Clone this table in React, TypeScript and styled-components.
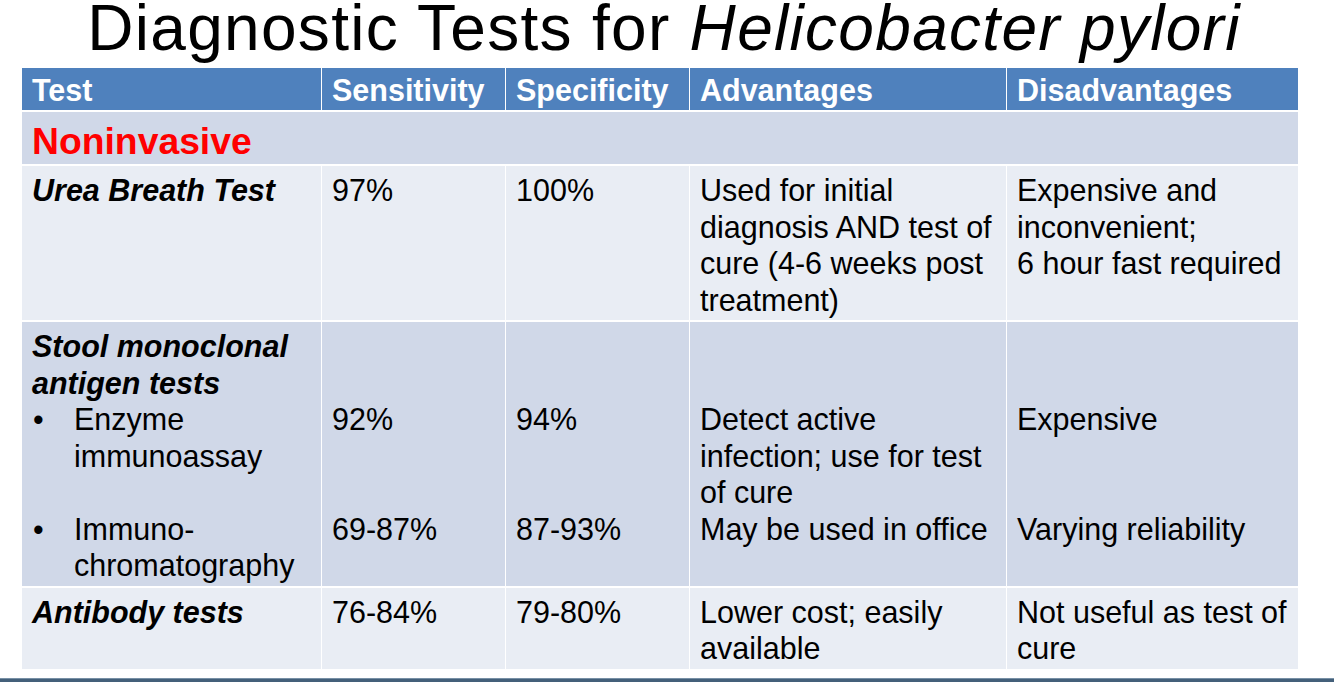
import React from "react";
import styled, { createGlobalStyle } from "styled-components";

const LINE = 36.5;

const GlobalStyle = createGlobalStyle`
    html, body {
        margin: 0;
        padding: 0;
        background: #ffffff;
    }
    body {
        font-family: "Liberation Sans", Arial, sans-serif;
        color: #000000;
    }
`;

const Slide = styled.div`
    width: 1334px;
    height: 682px;
    display: flex;
    flex-direction: column;
    overflow: hidden;
    background: #ffffff;
`;

const Title = styled.h1`
    margin: 0 0 12px;
    padding-right: 6px;
    font-size: 64px;
    line-height: 56px;
    letter-spacing: 1.3px;
    font-weight: normal;
    text-align: center;

    em {
        font-style: italic;
    }
`;

const Table = styled.div`
    display: grid;
    grid-template-columns: 299px 183px 183px 316px 291px;
    column-gap: 1px;
    row-gap: 2px;
    margin-left: 22px;
    width: 1276px;
    background: #ffffff;
`;

const HeadCell = styled.div`
    background: #4f81bd;
    color: #ffffff;
    font-size: 30.5px;
    font-weight: bold;
    line-height: ${LINE}px;
    padding: 4px 10px 1.5px;
    white-space: nowrap;
`;

const SectionCell = styled.div`
    grid-column: 1 / -1;
    background: #d0d8e8;
    color: #ff0000;
    font-size: 37.3px;
    font-weight: bold;
    line-height: 44px;
    padding: 7px 10px 1px;
`;

const Cell = styled.div<{ $band: "dark" | "light" }>`
    background: ${(p) => (p.$band === "dark" ? "#d0d8e8" : "#e9edf4")};
    font-size: 30.5px;
    line-height: ${LINE}px;
    padding: 6px 10px 2px;
    white-space: nowrap;
`;

const TestName = styled.div`
    font-weight: bold;
    font-style: italic;
`;

const Spacer = styled.div<{ $lines: number }>`
    height: ${(p) => p.$lines * LINE}px;
`;

const Bullet = styled.div`
    display: flex;

    &::before {
        content: "•";
        width: 41px;
        padding-left: 1px;
        flex-shrink: 0;
    }
`;

const Footer = styled.div`
    margin-top: auto;
    height: 3px;
    background: #44607a;
    border-top: 1px solid #7890a6;
`;

const headers = ["Test", "Sensitivity", "Specificity", "Advantages", "Disadvantages"];

export default function App() {
    return (
        <>
            <GlobalStyle />
            <Slide>
                <Title>
                    Diagnostic Tests for <em>Helicobacter pylori</em>
                </Title>
                <Table>
                    {headers.map((h) => (
                        <HeadCell key={h}>{h}</HeadCell>
                    ))}

                    <SectionCell>Noninvasive</SectionCell>

                    <Cell $band="light">
                        <TestName>Urea Breath Test</TestName>
                    </Cell>
                    <Cell $band="light">97%</Cell>
                    <Cell $band="light">100%</Cell>
                    <Cell $band="light">
                        Used for initial
                        <br />
                        diagnosis AND test of
                        <br />
                        cure (4-6 weeks post
                        <br />
                        treatment)
                    </Cell>
                    <Cell $band="light">
                        Expensive and
                        <br />
                        inconvenient;
                        <br />6 hour fast required
                    </Cell>

                    <Cell $band="dark">
                        <TestName>
                            Stool monoclonal
                            <br />
                            antigen tests
                        </TestName>
                        <Bullet>
                            <span>
                                Enzyme
                                <br />
                                immunoassay
                            </span>
                        </Bullet>
                        <Spacer $lines={1} />
                        <Bullet>
                            <span>
                                Immuno-
                                <br />
                                chromatography
                            </span>
                        </Bullet>
                    </Cell>
                    <Cell $band="dark">
                        <Spacer $lines={2} />
                        92%
                        <Spacer $lines={2} />
                        69-87%
                    </Cell>
                    <Cell $band="dark">
                        <Spacer $lines={2} />
                        94%
                        <Spacer $lines={2} />
                        87-93%
                    </Cell>
                    <Cell $band="dark">
                        <Spacer $lines={2} />
                        Detect active
                        <br />
                        infection; use for test
                        <br />
                        of cure
                        <br />
                        May be used in office
                    </Cell>
                    <Cell $band="dark">
                        <Spacer $lines={2} />
                        Expensive
                        <Spacer $lines={2} />
                        Varying reliability
                    </Cell>

                    <Cell $band="light">
                        <TestName>Antibody tests</TestName>
                    </Cell>
                    <Cell $band="light">76-84%</Cell>
                    <Cell $band="light">79-80%</Cell>
                    <Cell $band="light">
                        Lower cost; easily
                        <br />
                        available
                    </Cell>
                    <Cell $band="light">
                        Not useful as test of
                        <br />
                        cure
                    </Cell>
                </Table>
                <Footer />
            </Slide>
        </>
    );
}
